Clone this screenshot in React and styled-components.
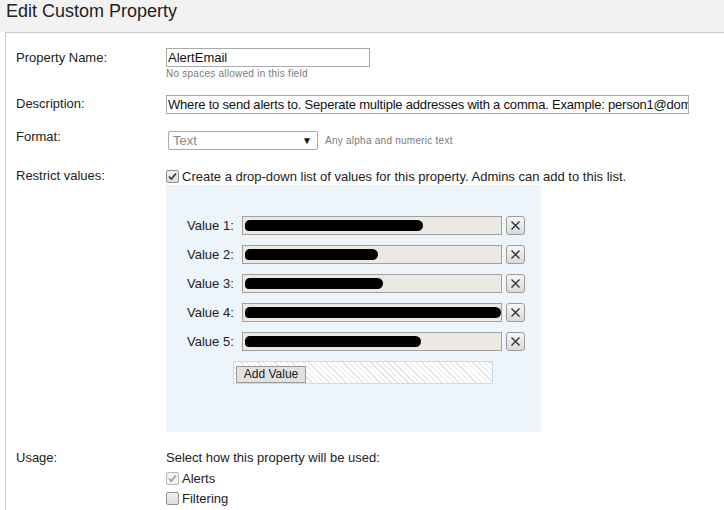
import React from "react";
import styled, { createGlobalStyle } from "styled-components";

const GlobalStyle = createGlobalStyle`
  html, body {
    margin: 0;
    padding: 0;
    background: #ffffff;
    overflow: hidden;
  }
  body {
    font-family: Arial, "Liberation Sans", sans-serif;
    color: #222;
  }
`;

const values = [
  { id: 1, blob: 178 },
  { id: 2, blob: 133 },
  { id: 3, blob: 138 },
  { id: 4, blob: 257 },
  { id: 5, blob: 176 },
];

const Check = ({ checked, disabled }) => (
  <CheckBox $disabled={disabled}>
    {checked && (
      <svg width="11" height="11" viewBox="0 0 11 11">
        <path
          d="M2 5.5 L4.3 8 L9 2.5"
          fill="none"
          stroke={disabled ? "#9a9a9a" : "#3a3a3a"}
          strokeWidth="1.8"
        />
      </svg>
    )}
  </CheckBox>
);

const RemoveIcon = () => (
  <svg width="11" height="11" viewBox="0 0 11 11">
    <path d="M1.5 1.5 L9.5 9.5 M9.5 1.5 L1.5 9.5" stroke="#333" strokeWidth="1.4" />
  </svg>
);

const App = () => {
  const renderValues = () =>
    values.map((v) => (
      <ValueRow key={v.id}>
        <ValueLabel>Value {v.id}:</ValueLabel>
        <ValueField>
          <Blob $w={v.blob} />
        </ValueField>
        <RemoveButton>
          <RemoveIcon />
        </RemoveButton>
      </ValueRow>
    ));

  return (
    <>
      <GlobalStyle />
      <Header>
        <h1>Edit Custom Property</h1>
      </Header>
      <Panel>
        <Row $mb={15}>
          <Label>Property Name:</Label>
          <div>
            <TextBox $w={204}>AlertEmail</TextBox>
            <Hint>No spaces allowed in this field</Hint>
          </div>
        </Row>

        <Row $mb={17}>
          <Label $pt={-1}>Description:</Label>
          <TextBox $w={523} $tight>
            Where to send alerts to. Seperate multiple addresses with a comma. Example:
            person1@domain.com
          </TextBox>
        </Row>

        <Row $mb={18}>
          <Label $pt={-4}>Format:</Label>
          <Inline>
            <Select>
              <span>Text</span>
              <Arrow>▼</Arrow>
            </Select>
            <Hint $inline>Any alpha and numeric text</Hint>
          </Inline>
        </Row>

        <Row $mb={18}>
          <Label $lh={16}>Restrict values:</Label>
          <div>
            <CheckLine>
              <Check checked />
              Create a drop-down list of values for this property. Admins can add to this list.
            </CheckLine>
            <ValuesBox>
              {renderValues()}
              <AddArea>
                <AddButton>Add Value</AddButton>
              </AddArea>
            </ValuesBox>
          </div>
        </Row>

        <Row>
          <Label $lh={16}>Usage:</Label>
          <div>
            <Text>Select how this property will be used:</Text>
            <UsageList>
              <CheckLine $h={20}>
                <Check checked disabled />
                Alerts
              </CheckLine>
              <CheckLine $h={20}>
                <Check />
                Filtering
              </CheckLine>
            </UsageList>
          </div>
        </Row>
      </Panel>
    </>
  );
};

const Header = styled.div`
  height: 32px;
  background: #f2f2f2;
  padding-left: 6px;
  box-sizing: border-box;

  h1 {
    margin: 0;
    font-size: 18px;
    font-weight: normal;
    line-height: 22px;
    color: #222;
  }
`;

const Panel = styled.div`
  margin-left: 5px;
  border-left: 1px solid #cccccc;
  border-top: 1px solid #cccccc;
  background: #fff;
  padding: 15px 0 0 10px;
  height: calc(100vh - 32px);
  overflow: hidden;
  box-sizing: border-box;
`;

const Row = styled.div`
  display: grid;
  grid-template-columns: 150px 1fr;
  align-items: start;
  margin-bottom: ${(p) => p.$mb || 0}px;
`;

const Label = styled.div`
  font-size: 13px;
  line-height: ${(p) => p.$lh || 19}px;
  margin-top: ${(p) => p.$pt || 0}px;
  color: #222;
`;

const TextBox = styled.div`
  width: ${(p) => p.$w}px;
  height: 19px;
  box-sizing: border-box;
  border: 1px solid #a9a9a9;
  padding: 0 1px;
  font-size: 13px;
  letter-spacing: ${(p) => (p.$tight ? "-0.2px" : "0")};
  line-height: 17px;
  color: #111;
  white-space: nowrap;
  overflow: hidden;
`;

const Hint = styled.div`
  font-size: 10px;
  letter-spacing: 0.25px;
  color: #7a7a7a;
  line-height: 12px;
  margin-left: ${(p) => (p.$inline ? 7 : 0)}px;
  margin-top: ${(p) => (p.$inline ? 4 : 1)}px;
`;

const Inline = styled.div`
  display: flex;
  align-items: flex-start;
`;

const Select = styled.div`
  width: 150px;
  height: 19px;
  margin-left: 2px;
  box-sizing: border-box;
  border: 1px solid #a9a9a9;
  border-radius: 2px;
  display: flex;
  align-items: center;
  justify-content: space-between;
  padding: 0 5px 0 4px;
  font-size: 13px;
  color: #888;
`;

const Arrow = styled.span`
  font-size: 10px;
  color: #111;
`;

const CheckLine = styled.div`
  display: flex;
  align-items: center;
  font-size: 13px;
  height: ${(p) => p.$h || 16}px;
  color: #222;
`;

const UsageList = styled.div`
  padding-top: 2px;
`;

const CheckBox = styled.span`
  width: 13px;
  height: 13px;
  box-sizing: border-box;
  margin: 0 3px 0 0;
  border: 1px solid ${(p) => (p.$disabled ? "#b8b8b8" : "#8f8f8f")};
  border-radius: 2px;
  background: ${(p) =>
    p.$disabled ? "#f2f2f2" : "linear-gradient(#f0f0f0, #dedede)"};
  display: flex;
  align-items: center;
  justify-content: center;
`;

const Text = styled.div`
  font-size: 13px;
  line-height: 16px;
  color: #222;
`;

const ValuesBox = styled.div`
  width: 375px;
  height: 247px;
  margin-top: 1px;
  box-sizing: border-box;
  background: #edf4fa;
  padding: 31px 0 0 21px;
`;

const ValueRow = styled.div`
  display: flex;
  align-items: center;
  height: 19px;
  margin-bottom: 10px;
`;

const ValueLabel = styled.div`
  width: 55px;
  font-size: 13px;
  color: #222;
`;

const ValueField = styled.div`
  width: 260px;
  height: 19px;
  box-sizing: border-box;
  border: 1px solid #a0a0a0;
  background: #ebe9e2;
  display: flex;
  align-items: center;
  padding-left: 2px;
  overflow: hidden;
`;

const Blob = styled.span`
  display: block;
  width: ${(p) => p.$w}px;
  max-width: 256px;
  height: 11px;
  background: #000;
  border-radius: 6px 7px 7px 5px;
`;

const RemoveButton = styled.div`
  width: 19px;
  height: 19px;
  margin-left: 4px;
  box-sizing: border-box;
  border: 1px solid #9c9c9c;
  border-radius: 3px;
  background: linear-gradient(#f6f6f6, #dadada);
  display: flex;
  align-items: center;
  justify-content: center;
`;

const AddArea = styled.div`
  width: 260px;
  height: 23px;
  margin: 1px 0 0 46px;
  box-sizing: border-box;
  border: 1px solid #cddbe8;
  padding: 2px;
  background: repeating-linear-gradient(
    45deg,
    #ffffff 0px,
    #ffffff 3px,
    #e2e2e2 3px,
    #e2e2e2 4px
  );
`;

const AddButton = styled.div`
  display: inline-block;
  width: 70px;
  height: 17px;
  box-sizing: border-box;
  border: 1px solid #999;
  background: #e1e1e1;
  font-size: 12px;
  line-height: 15px;
  text-align: center;
  color: #222;
`;

export default App;
